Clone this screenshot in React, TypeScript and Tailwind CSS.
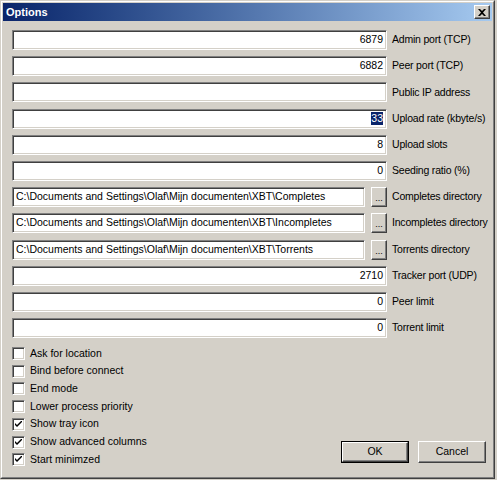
import React from 'react'

const font = { fontFamily: '"Liberation Sans", Arial, sans-serif' }

interface Field {
  label: string
  value: string
  align: 'left' | 'right'
  browse?: boolean
  selected?: boolean
}

const fields: Field[] = [
  { label: 'Admin port (TCP)', value: '6879', align: 'right' },
  { label: 'Peer port (TCP)', value: '6882', align: 'right' },
  { label: 'Public IP address', value: '', align: 'right' },
  { label: 'Upload rate (kbyte/s)', value: '33', align: 'right', selected: true },
  { label: 'Upload slots', value: '8', align: 'right' },
  { label: 'Seeding ratio (%)', value: '0', align: 'right' },
  { label: 'Completes directory', value: 'C:\\Documents and Settings\\Olaf\\Mijn documenten\\XBT\\Completes', align: 'left', browse: true },
  { label: 'Incompletes directory', value: 'C:\\Documents and Settings\\Olaf\\Mijn documenten\\XBT\\Incompletes', align: 'left', browse: true },
  { label: 'Torrents directory', value: 'C:\\Documents and Settings\\Olaf\\Mijn documenten\\XBT\\Torrents', align: 'left', browse: true },
  { label: 'Tracker port (UDP)', value: '2710', align: 'right' },
  { label: 'Peer limit', value: '0', align: 'right' },
  { label: 'Torrent limit', value: '0', align: 'right' },
]

const checks = [
  { label: 'Ask for location', on: false },
  { label: 'Bind before connect', on: false },
  { label: 'End mode', on: false },
  { label: 'Lower process priority', on: false },
  { label: 'Show tray icon', on: true },
  { label: 'Show advanced columns', on: true },
  { label: 'Start minimzed', on: true },
]

const sunken =
  'border border-t-[#808080] border-l-[#808080] border-b-white border-r-white shadow-[inset_1px_1px_0_#404040,inset_-1px_-1px_0_#d4d0c8]'
const raised =
  'border border-t-white border-l-white border-b-[#404040] border-r-[#404040] shadow-[inset_-1px_-1px_0_#808080] bg-[#d4d0c8]'

function Input({ field }: { field: Field }) {
  return (
    <div
      className={`${sunken} bg-white h-[20px] shrink-0 flex items-center px-[3px] text-[10.5px] text-black overflow-hidden whitespace-nowrap ${
        field.align === 'right' ? 'justify-end' : 'justify-start'
      } ${field.browse ? 'w-[353px]' : 'w-[375px]'}`}
    >
      {field.selected ? (
        <span className="bg-[#0a246a] text-white leading-[13px]">{field.value}</span>
      ) : (
        field.value
      )}
    </div>
  )
}

function CheckBox({ on }: { on: boolean }) {
  return (
    <div className={`${sunken} bg-white w-[13px] h-[13px] flex items-center justify-center shrink-0`}>
      {on && (
        <svg width="7" height="7" viewBox="0 0 7 7">
          <path d="M0 2 L0 4 L2 6 L7 1 L7 -1 L2 4 Z" fill="#000" />
        </svg>
      )}
    </div>
  )
}

export default function App() {
  return (
    <div className="w-[497px] h-[480px] bg-[#d4d0c8]" style={font}>
      <div className="w-[495px] h-[479px] border border-t-[#d4d0c8] border-l-[#d4d0c8] border-b-[#404040] border-r-[#404040]">
        <div className="h-full border border-t-white border-l-white border-b-[#808080] border-r-[#808080] p-px flex flex-col">
          {/* title bar */}
          <div className="h-[18px] bg-gradient-to-r from-[#0a246a] to-[#a6caf0] flex items-center justify-between pl-[3px] pr-[2px]">
            <span className="text-white font-bold text-[11px]">Options</span>
            <div className={`${raised} w-[16px] h-[14px] flex items-center justify-center`}>
              <svg width="8" height="7" viewBox="0 0 8 7">
                <path d="M0 0h2l2 2 2-2h2L5 3.5 8 7H6L4 5 2 7H0l3-3.5z" fill="#000" />
              </svg>
            </div>
          </div>

          <div className="flex-1 pl-[9px] pr-[6px] pt-[9px] flex flex-col">
            <div className="flex flex-col gap-[6.2px]">
              {fields.map((f) => (
                <div key={f.label} className="flex items-center h-[20px]">
                  <Input field={f} />
                  {f.browse && (
                    <div className={`${raised} w-[16px] h-[20px] ml-[6px] shrink-0 flex items-end justify-center pb-[3px] text-[9px] leading-none text-black`}>
                      ...
                    </div>
                  )}
                  <span className="ml-[5px] text-[10.5px] tracking-[-0.2px] text-black whitespace-nowrap">{f.label}</span>
                </div>
              ))}
            </div>

            <div className="flex justify-between items-end mt-[9px]">
              <div className="flex flex-col gap-[4.7px]">
                {checks.map((c) => (
                  <div key={c.label} className="flex items-center h-[13px] gap-[5px]">
                    <CheckBox on={c.on} />
                    <span className="text-[10.5px] text-black whitespace-nowrap">{c.label}</span>
                  </div>
                ))}
              </div>
              <div className="flex gap-[9px] mb-[3px]">
                <div className="border border-black">
                  <div className={`${raised} w-[66px] h-[20px] flex items-center justify-center text-[10.5px] text-black`}>OK</div>
                </div>
                <div className={`${raised} w-[68px] h-[22px] flex items-center justify-center text-[10.5px] text-black`}>Cancel</div>
              </div>
            </div>
          </div>
        </div>
      </div>
    </div>
  )
}
